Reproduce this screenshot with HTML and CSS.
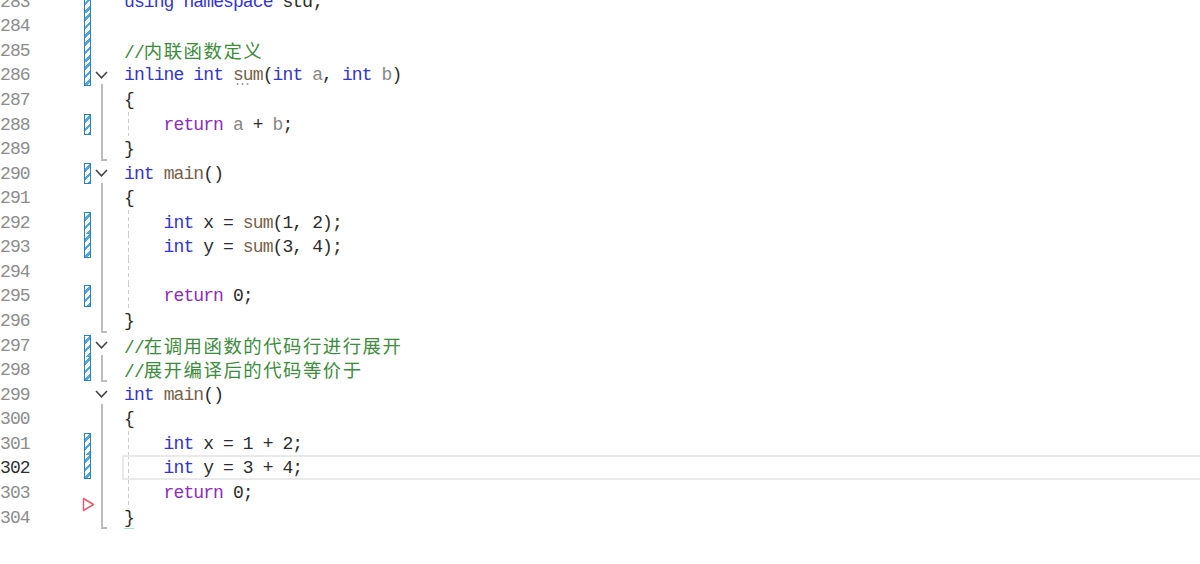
FILE: index.html
```html
<!DOCTYPE html>
<html lang="zh">
<head>
<meta charset="utf-8">
<title>Editor</title>
<link rel="stylesheet" href="styles.css">
</head>
<body>
<div class="editor">
  <div class="row"><span class="ln">283</span><span class="mk chg"></span><span class="fold"></span><span class="code"><span class="kw">using</span> <span class="kw">namespace</span> std;</span></div>
  <div class="row"><span class="ln">284</span><span class="mk chg"></span><span class="fold"></span><span class="code"></span></div>
  <div class="row"><span class="ln">285</span><span class="mk chg"></span><span class="fold"></span><span class="code"><span class="cm">//<span class="zh">内联函数定义</span></span></span></div>
  <div class="row"><span class="ln">286</span><span class="mk chg b"></span><span class="fold fs"><span class="chev"><svg width="13" height="8" viewBox="0 0 13 8"><path d="M1 1 L6.5 6.8 L12 1" fill="none" stroke="#444" stroke-width="1.6"/></svg></span><span class="vl"></span></span><span class="code"><span class="kw">inline</span> <span class="kw">int</span> <span class="fn sq">sum</span>(<span class="kw">int</span> <span class="pm">a</span>, <span class="kw">int</span> <span class="pm">b</span>)</span></div>
  <div class="row"><span class="ln">287</span><span class="mk"></span><span class="fold fm"><span class="vl"></span></span><span class="code">{</span></div>
  <div class="row g"><span class="ln">288</span><span class="mk chg t b"></span><span class="fold fm"><span class="vl"></span></span><span class="code">    <span class="rt">return</span> <span class="pm">a</span> + <span class="pm">b</span>;</span></div>
  <div class="row"><span class="ln">289</span><span class="mk"></span><span class="fold fe"><span class="vl"></span></span><span class="code">}</span></div>
  <div class="row"><span class="ln">290</span><span class="mk chg t b"></span><span class="fold fs"><span class="chev"><svg width="13" height="8" viewBox="0 0 13 8"><path d="M1 1 L6.5 6.8 L12 1" fill="none" stroke="#444" stroke-width="1.6"/></svg></span><span class="vl"></span></span><span class="code"><span class="kw">int</span> <span class="fn">main</span>()</span></div>
  <div class="row"><span class="ln">291</span><span class="mk"></span><span class="fold fm"><span class="vl"></span></span><span class="code">{</span></div>
  <div class="row g"><span class="ln">292</span><span class="mk chg t"></span><span class="fold fm"><span class="vl"></span></span><span class="code">    <span class="kw">int</span> x = <span class="fn">sum</span>(1, 2);</span></div>
  <div class="row g"><span class="ln">293</span><span class="mk chg b"></span><span class="fold fm"><span class="vl"></span></span><span class="code">    <span class="kw">int</span> y = <span class="fn">sum</span>(3, 4);</span></div>
  <div class="row g"><span class="ln">294</span><span class="mk"></span><span class="fold fm"><span class="vl"></span></span><span class="code"></span></div>
  <div class="row g"><span class="ln">295</span><span class="mk chg t b"></span><span class="fold fm"><span class="vl"></span></span><span class="code">    <span class="rt">return</span> 0;</span></div>
  <div class="row"><span class="ln">296</span><span class="mk"></span><span class="fold fe"><span class="vl"></span></span><span class="code">}</span></div>
  <div class="row"><span class="ln">297</span><span class="mk chg t"></span><span class="fold fs"><span class="chev"><svg width="13" height="8" viewBox="0 0 13 8"><path d="M1 1 L6.5 6.8 L12 1" fill="none" stroke="#444" stroke-width="1.6"/></svg></span><span class="vl"></span></span><span class="code"><span class="cm">//<span class="zh">在调用函数的代码行进行展开</span></span></span></div>
  <div class="row"><span class="ln">298</span><span class="mk chg b"></span><span class="fold fe"><span class="vl"></span></span><span class="code"><span class="cm">//<span class="zh">展开编译后的代码等价于</span></span></span></div>
  <div class="row"><span class="ln">299</span><span class="mk"></span><span class="fold fs"><span class="chev"><svg width="13" height="8" viewBox="0 0 13 8"><path d="M1 1 L6.5 6.8 L12 1" fill="none" stroke="#444" stroke-width="1.6"/></svg></span><span class="vl"></span></span><span class="code"><span class="kw">int</span> <span class="fn">main</span>()</span></div>
  <div class="row"><span class="ln">300</span><span class="mk"></span><span class="fold fm"><span class="vl"></span></span><span class="code">{</span></div>
  <div class="row g"><span class="ln">301</span><span class="mk chg t"></span><span class="fold fm"><span class="vl"></span></span><span class="code">    <span class="kw">int</span> x = 1 + 2;</span></div>
  <div class="row g cur"><span class="ln">302</span><span class="mk chg b"></span><span class="fold fm"><span class="vl"></span></span><span class="code">    <span class="kw">int</span> y = 3 + 4;</span></div>
  <div class="row g"><span class="ln">303</span><span class="mk"><svg class="tri" width="13" height="15" viewBox="0 0 13 15"><path d="M1.5 1.5 L11.5 7.5 L1.5 13.5 Z" fill="#fff" stroke="#d9606c" stroke-width="1.5" stroke-linejoin="round"/></svg></span><span class="fold fm"><span class="vl"></span></span><span class="code">    <span class="rt">return</span> 0;</span></div>
  <div class="row"><span class="ln">304</span><span class="mk"></span><span class="fold fe"><span class="vl"></span></span><span class="code">}<span class="tick"></span></span></div>
</div>
</body>
</html>
```

FILE: styles.css
```css
html, body {
  margin: 0;
  padding: 0;
  background: #ffffff;
  overflow: hidden;
}

body {
  font-family: "Liberation Mono", "DejaVu Sans Mono", monospace;
}

.editor {
  margin-top: -11.3px;
  display: flex;
  flex-direction: column;
}

.row {
  display: flex;
  height: 24.57px;
}

.ln {
  width: 28px;
  flex: none;
  text-align: right;
  color: #8c8c8c;
  font-size: 18px;
  letter-spacing: -0.9px;
  line-height: 27.5px;
  white-space: pre;
}

.cur .ln {
  color: #2f2f2f;
}

.mk {
  width: 7px;
  flex: none;
  margin-left: 56px;
  box-sizing: border-box;
  position: relative;
}

.mk.chg {
  border-left: 1.5px solid #2b80c2;
  border-right: 1.5px solid #2b80c2;
  background: repeating-linear-gradient(135deg, #ffffff 0 3.5px, #4fa8e0 3.5px 6px);
}

.mk.chg.t {
  margin-top: 2px;
  border-top: 1.5px solid #2b80c2;
}

.mk.chg.b {
  margin-bottom: 1px;
  border-bottom: 1.5px solid #2b80c2;
}

.tri {
  position: absolute;
  left: -2px;
  top: 17px;
}

.fold {
  width: 20px;
  flex: none;
  margin-left: 1px;
  display: flex;
  flex-direction: column;
}

.chev {
  height: 22px;
  flex: none;
  box-sizing: border-box;
  padding-top: 8.6px;
  padding-left: 3px;
  display: flex;
  align-items: flex-start;
}

.vl {
  flex: 1;
  margin-left: 9px;
  width: 6px;
  box-sizing: border-box;
  border-left: 2px solid #bcbcbc;
}

.fe .vl {
  border-bottom: 2px solid #bcbcbc;
}

.code {
  flex: 1;
  margin-left: 10px;
  margin-right: -20px;
  padding-left: 2px;
  color: #2b2b2b;
  font-size: 18px;
  letter-spacing: -0.9px;
  line-height: 27.5px;
  white-space: pre;
  position: relative;
}

.g .code {
  background: repeating-linear-gradient(to bottom, #cdcdcd 0 4px, transparent 4px 7px) no-repeat 6px 0 / 1px 100%;
}

.cur .code {
  box-shadow: inset 0 0 0 2px #e9e9e9;
}

.kw {
  color: #3434cc;
}

.rt {
  color: #8a2dbb;
}

.fn {
  color: #76604a;
}

.pm {
  color: #878787;
}

.cm {
  color: #3d8b3d;
}

.zh {
  font-family: "Noto Sans CJK SC", sans-serif;
  font-size: 18.4px;
  letter-spacing: 1.5px;
  font-weight: 400;
  line-height: 24px;
}

.sq {
  position: relative;
}

.sq::after {
  content: "";
  position: absolute;
  left: 2px;
  bottom: 0;
  width: 15px;
  height: 2px;
  background-image: radial-gradient(circle, #9a9a9a 0.9px, transparent 1.2px);
  background-size: 5px 2px;
}

.tick {
  position: absolute;
  left: 2px;
  bottom: -1px;
  width: 10px;
  height: 2px;
  background: #b3dcc4;
}
```
